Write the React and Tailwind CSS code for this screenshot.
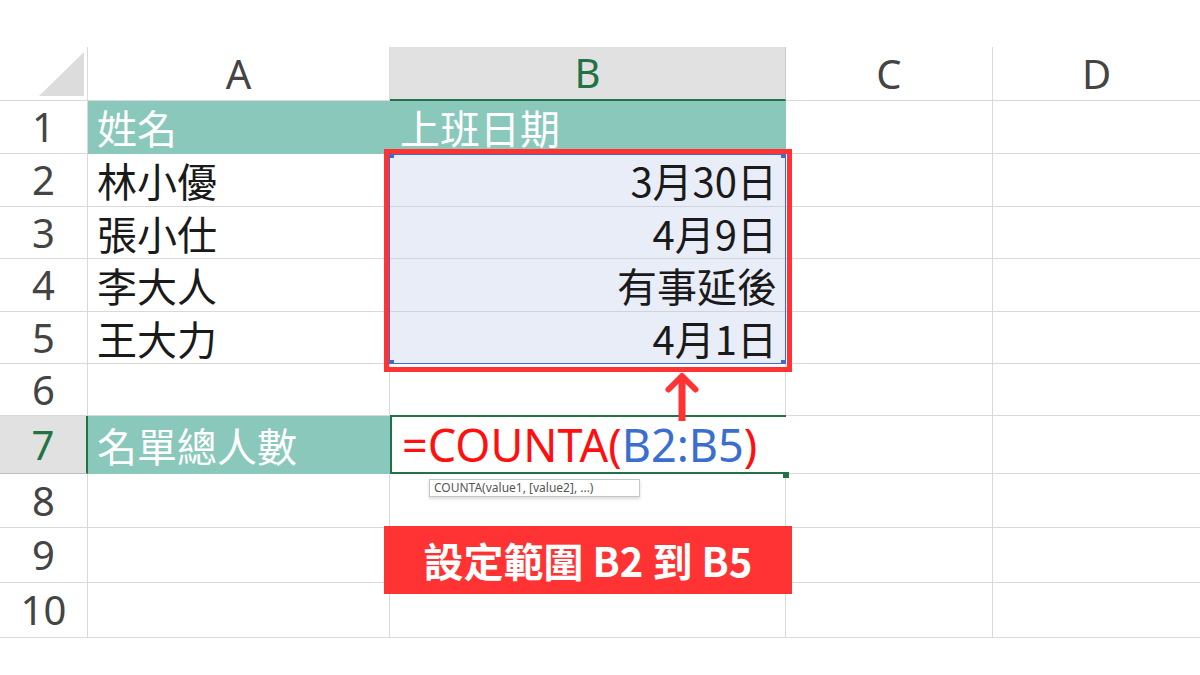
import React from "react";

const cols = ["A", "B", "C", "D"];

// row label, A value, B value, kind
const rows = [
  { n: 1, a: "姓名", b: "上班日期", kind: "head" },
  { n: 2, a: "林小優", b: "3月30日" },
  { n: 3, a: "張小仕", b: "4月9日" },
  { n: 4, a: "李大人", b: "有事延後" },
  { n: 5, a: "王大力", b: "4月1日" },
  { n: 6, a: "", b: "" },
  { n: 7, a: "名單總人數", b: "", kind: "formula" },
  { n: 8, a: "", b: "" },
  { n: 9, a: "", b: "" },
  { n: 10, a: "", b: "" },
];

const cjk = { fontFamily: '"Noto Sans CJK TC", "Noto Sans", sans-serif' };
const latin = { fontFamily: '"Noto Sans", "Liberation Sans", sans-serif' };

function RowCells({ row }) {
  const selected = row.kind === "formula";
  const inRange = row.n >= 2 && row.n <= 5;

  return (
    <>
      <div
        className={
          "flex items-center justify-center border-b text-[40px] leading-none " +
          (selected
            ? "bg-[#e1e1e1] border-b-[#bdbdbd] border-r-2 border-r-[#217346] text-[#217346]"
            : "border-r border-[#d9d9d9] text-[#444]")
        }
        style={latin}
      >
        {row.n}
      </div>

      <div
        className={
          "flex items-center pl-[9px] text-[40px] leading-none whitespace-nowrap border-r border-b " +
          (row.kind === "head" || selected
            ? "bg-[#89c8bb] text-white border-transparent"
            : "border-[#d9d9d9] text-[#1a1a1a]")
        }
        style={cjk}
      >
        {row.a}
      </div>

      {row.kind === "formula" ? (
        <div
          className="flex items-center pl-[10px] bg-white border-t-2 border-l-2 border-b-2 border-[#217346] text-[45px] leading-none whitespace-nowrap -mt-px"
          style={latin}
        >
          <span className="text-[#ff1010]">=COUNTA(</span>
          <span className="text-[#3a6fcf]">B2:B5</span>
          <span className="text-[#ff1010]">)</span>
        </div>
      ) : (
        <div
          className={
            "flex items-center text-[40px] leading-none whitespace-nowrap border-r border-b " +
            (row.kind === "head"
              ? "bg-[#89c8bb] text-white border-transparent pl-[10px]"
              : inRange
              ? "bg-[#e9edf7] border-[#d0d3da] justify-end pr-[8px] text-[#1a1a1a]"
              : "border-[#d9d9d9]")
          }
          style={cjk}
        >
          {row.b}
        </div>
      )}

      <div className="border-r border-b border-[#d9d9d9]" />
      <div className="border-b border-[#d9d9d9]" />
    </>
  );
}

export default function App() {
  return (
    <div className="relative w-[1200px] h-[675px] bg-white overflow-hidden">
      <div className="pt-[47px] grid grid-cols-[88px_302px_396px_207px_207px] grid-rows-[54px_53px_53px_52px_53px_52px_52px_58px_54px_55px_55px]">
        {/* corner */}
        <div className="flex items-end justify-end pr-[3px] pb-[4px] border-r border-b border-[#d9d9d9]">
          <svg width="45" height="44" viewBox="0 0 45 44">
            <polygon points="0,44 45,44 45,0" fill="#dcdcdc" />
          </svg>
        </div>
        {cols.map((c) => (
          <div
            key={c}
            className={
              "flex items-center justify-center text-[40px] leading-none " +
              (c === "B"
                ? "bg-[#e1e1e1] text-[#217346] border-r border-r-[#c8c8c8] border-b-2 border-b-[#217346]"
                : c === "D"
                ? "text-[#444] border-b border-[#d9d9d9]"
                : "text-[#444] border-r border-b border-[#d9d9d9]")
            }
            style={latin}
          >
            {c}
          </div>
        ))}

        {rows.map((r) => (
          <RowCells key={r.n} row={r} />
        ))}
      </div>

      {/* range highlight around B2:B5 */}
      <div className="absolute left-[384px] top-[149px] w-[408px] h-[223px] border-[5px] border-[#ff3333]" />
      <div className="absolute left-[389px] top-[154px] w-[397px] h-[210px] border border-[#3f6bd0]">
        <div className="absolute -left-px -top-px w-[5px] h-[4px] bg-[#3f6bd0]" />
        <div className="absolute -right-px -top-px w-[5px] h-[4px] bg-[#3f6bd0]" />
        <div className="absolute -left-px -bottom-px w-[5px] h-[4px] bg-[#3f6bd0]" />
        <div className="absolute -right-px -bottom-px w-[5px] h-[4px] bg-[#3f6bd0]" />
      </div>

      {/* fill handle */}
      <div className="absolute left-[783px] top-[472px] w-[6px] h-[6px] bg-[#217346]" />

      {/* arrow */}
      <svg className="absolute left-[664px] top-[370px]" width="36" height="52" viewBox="0 0 36 52">
        <rect x="14.5" y="8" width="7" height="43" fill="#ff3333" />
        <path d="M4.5 19.5 L18 6 L31.5 19.5" stroke="#ff3333" strokeWidth="6" strokeLinecap="round" strokeLinejoin="round" fill="none" />
      </svg>

      {/* function tooltip */}
      <div
        className="absolute left-[429px] top-[479px] w-[211px] h-[18px] flex items-center px-[4px] bg-white border border-[#c6c6c6] shadow-[0_2px_3px_rgba(0,0,0,0.15)] text-[12px] leading-none text-[#555] whitespace-nowrap"
        style={latin}
      >
        COUNTA(value1, [value2], ...)
      </div>

      {/* caption */}
      <div
        className="absolute left-[384px] top-[526px] w-[408px] h-[68px] flex items-center justify-center bg-[#ff3333] text-white text-[40px] font-bold leading-none whitespace-nowrap"
        style={cjk}
      >
        設定範圍 B2 到 B5
      </div>
    </div>
  );
}
